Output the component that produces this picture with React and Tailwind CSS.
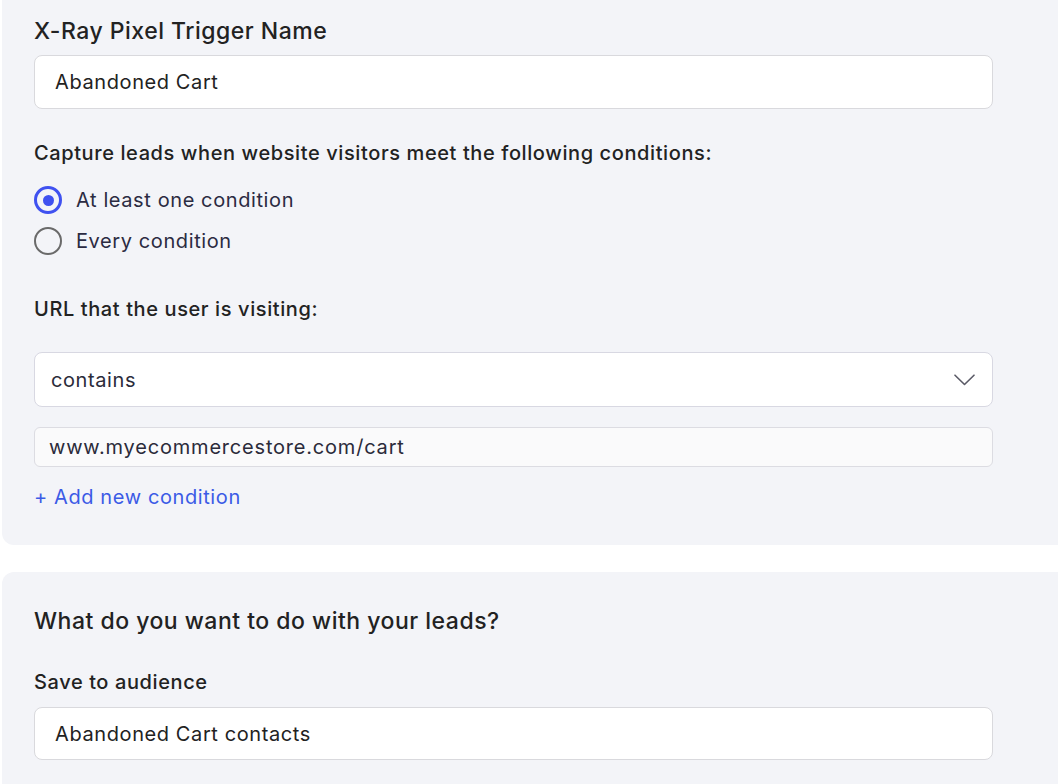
import React, { useState } from 'react';

const Radio = ({ checked, label, onChange }) => (
    <label className="flex items-center h-[28px] cursor-pointer" onClick={onChange}>
        <span
            className={
                checked
                    ? 'flex items-center justify-center w-[28px] h-[28px] rounded-full border-[3px] border-[#3f51f0]'
                    : 'flex items-center justify-center w-[28px] h-[28px] rounded-full border-[2.5px] border-[#6a6a6a]'
            }
        >
            {checked && <span className="w-[11px] h-[11px] rounded-full bg-[#3f51f0]" />}
        </span>
        <span className="ml-[14px] text-[20px] tracking-[0.6px] text-[#2b2b42]">{label}</span>
    </label>
);

const ChevronDown = () => (
    <svg width="21" height="12" viewBox="0 0 21 12" fill="none">
        <path d="M1 1.2 L10.5 10.5 L20 1.2" stroke="#5a5a66" strokeWidth="1.6" strokeLinecap="round" strokeLinejoin="round" />
    </svg>
);

const App = () => {
    const [mode, setMode] = useState('any');

    return (
        <div className="min-h-screen bg-white overflow-hidden font-['Inter',sans-serif] text-[#222]">
            {/* trigger settings */}
            <div className="ml-[2px] w-[1100px] rounded-bl-xl bg-[#f3f4f8] pl-8 pt-[17px] pb-[34px]">
                <h2 className="text-[23px] leading-[28px] tracking-[0.5px] font-medium text-[#222]">X-Ray Pixel Trigger Name</h2>
                <div className="mt-[10px] w-[959px] h-[54px] flex items-center px-[20px] bg-white border border-[#d9d9dd] rounded-lg text-[20px] tracking-[0.6px] text-[#222]">
                    Abandoned Cart
                </div>

                <p className="mt-[30px] text-[20px] leading-[28px] tracking-[0.6px] font-medium text-[#222]">
                    Capture leads when website visitors meet the following conditions:
                </p>
                <div className="mt-[19px] flex flex-col gap-[13px]">
                    <Radio checked={mode === 'any'} label="At least one condition" onChange={() => setMode('any')} />
                    <Radio checked={mode === 'every'} label="Every condition" onChange={() => setMode('every')} />
                </div>

                <p className="mt-[40px] text-[20px] leading-[28px] tracking-[0.6px] font-medium text-[#222]">URL that the user is visiting:</p>
                <div className="mt-[29px] w-[959px] h-[55px] flex items-center justify-between pl-[16px] pr-[17px] bg-white border border-[#d8d8e2] rounded-lg">
                    <span className="text-[20px] tracking-[0.6px] text-[#2b2b3a]">contains</span>
                    <ChevronDown />
                </div>
                <div className="mt-[20px] w-[959px] h-[40px] flex items-center px-[14px] bg-[#fafafb] border border-[#dcdce2] rounded-md text-[20px] tracking-[0.8px] text-[#2b2b3a]">
                    www.myecommercestore.com/cart
                </div>
                <button className="mt-[16px] block h-[28px] text-[20px] leading-[28px] tracking-[0.6px] text-[#3b5be6]">+ Add new condition</button>
            </div>

            {/* lead actions */}
            <div className="ml-[2px] mt-[27px] w-[1100px] rounded-tl-xl bg-[#f3f4f8] pl-8 pt-[35px] pb-[40px]">
                <h2 className="text-[23px] leading-[28px] tracking-[0.5px] font-medium text-[#222]">What do you want to do with your leads?</h2>
                <p className="mt-[33px] text-[20px] leading-[28px] tracking-[0.6px] font-medium text-[#222]">Save to audience</p>
                <div className="mt-[11px] w-[959px] h-[53px] flex items-center px-[20px] bg-white border border-[#d9d9dd] rounded-lg text-[20px] tracking-[0.6px] text-[#222]">
                    Abandoned Cart contacts
                </div>
            </div>
        </div>
    );
};

export default App;
